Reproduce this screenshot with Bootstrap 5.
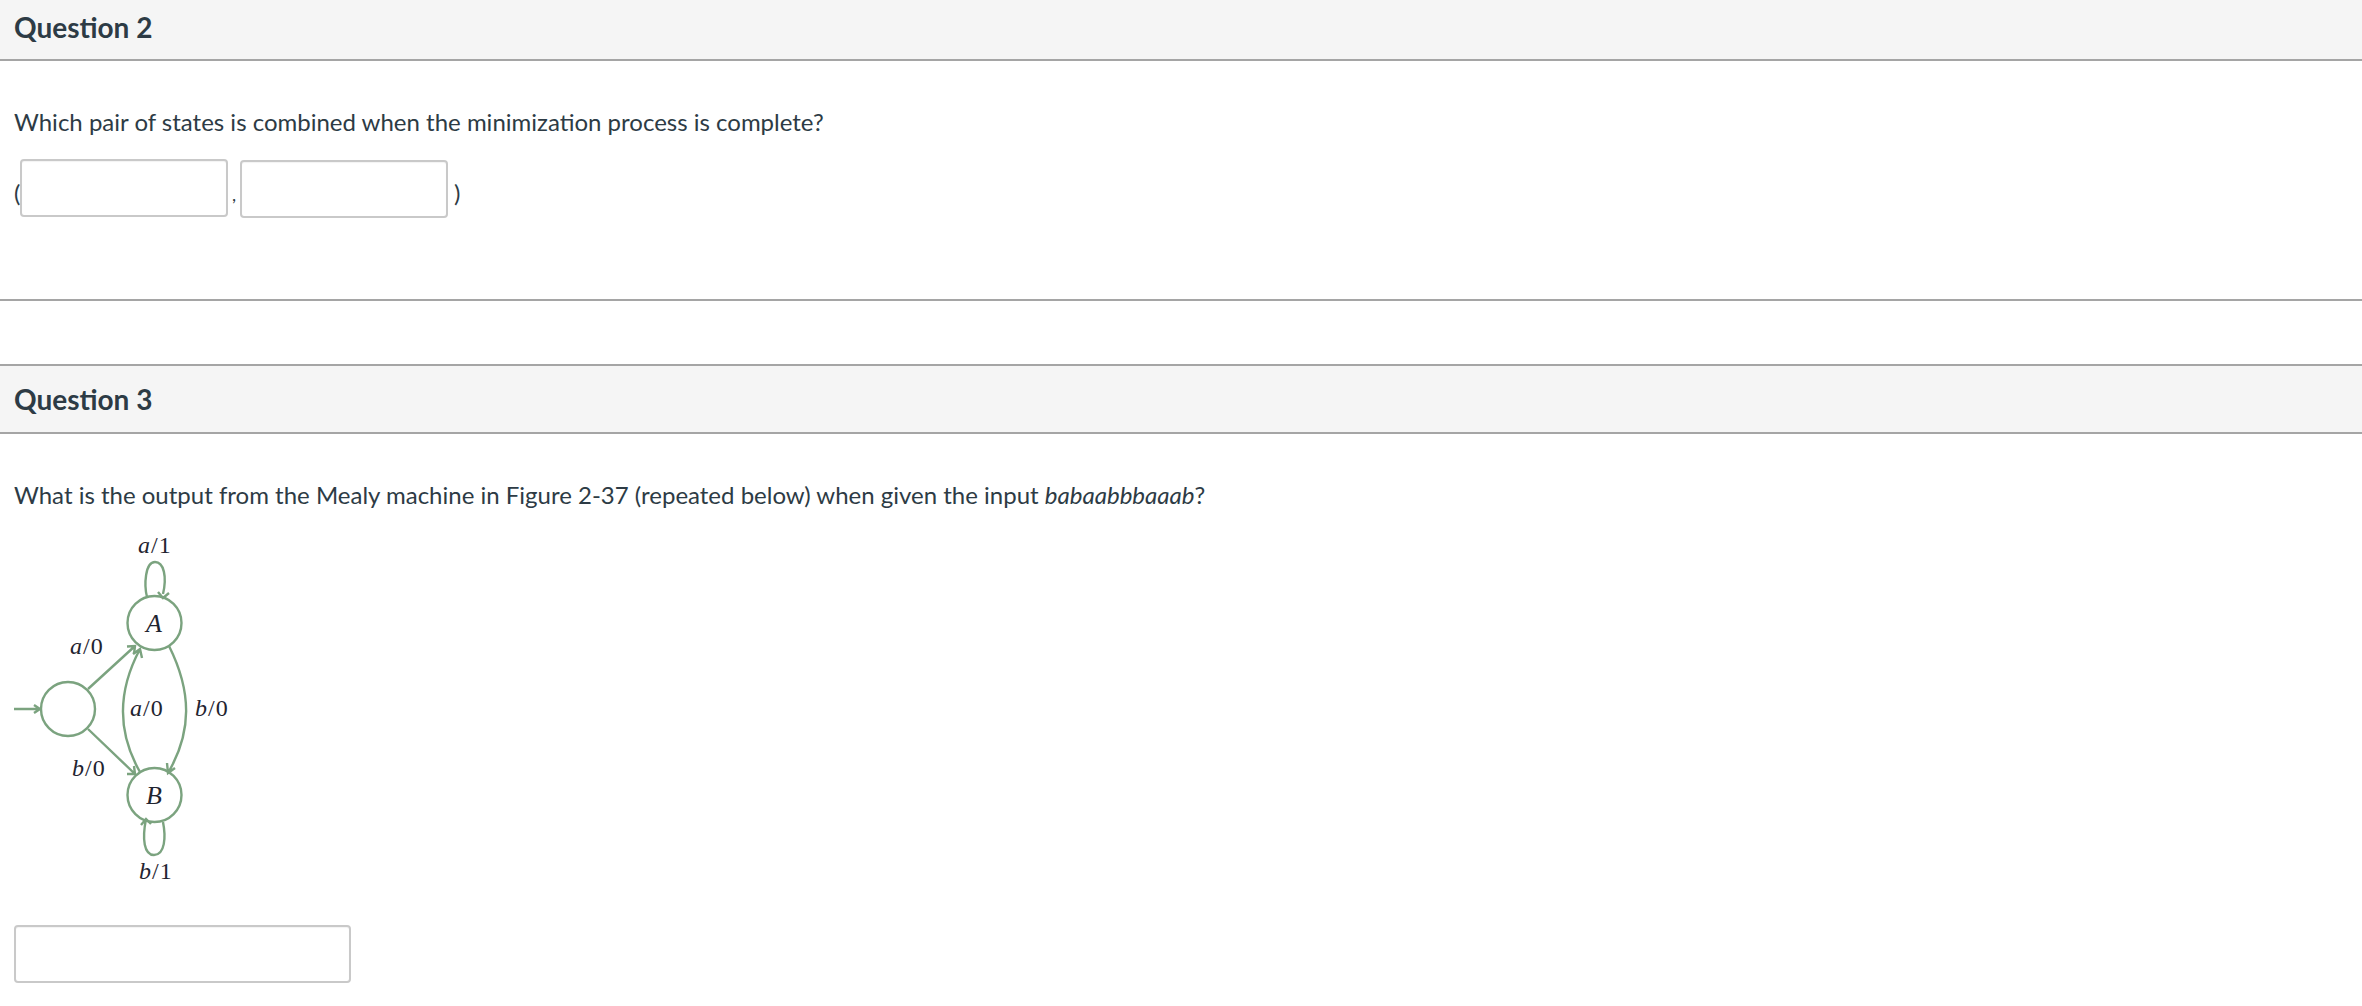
<!DOCTYPE html>
<html lang="en">
<head>
<meta charset="utf-8">
<title>Questions</title>
<link href="https://cdn.jsdelivr.net/npm/bootstrap@5.3.0/dist/css/bootstrap.min.css" rel="stylesheet">
<style>
html,body{background:#fff;overflow:hidden}
body{font-family:Lato,"Liberation Sans",sans-serif;color:#2d3b45;font-size:24px;line-height:36px}
.q-head{background:#f5f5f5;border-bottom:2px solid #a5a5a5;padding:0 14px;display:flex;align-items:center}
.q-head h2{font-family:Lato,sans-serif;font-size:28px;font-weight:700;margin:0;color:#2d3b45;line-height:36px}
.q-head-a{height:61px;padding-bottom:5px}
.q-head-b{height:70px;border-top:2px solid #a5a5a5}
.q-body-a{height:240px;padding:0 14px;border-bottom:2px solid #a5a5a5}
.q-spacer{height:63px}
.q-body-b{padding:0 14px}
.q-text-a{margin:0;padding-top:43px}
.q-text-b{margin:0;padding-top:43px}
.ans-row{margin-top:20px;height:60px;font-size:24px;align-items:center}
.ans{display:block;background:#fff;border:2px solid #c9c9c9;border-radius:4px;height:58px;box-shadow:inset 0 1px 1px rgba(0,0,0,.05);padding:0}
.ans-s{width:208px}
.ans-l{width:337px;margin-top:38px}
.ans-1{margin-top:-5px}
.ans-2{margin-top:-3px}
.sep{font-size:18px;width:12px;text-align:center;padding-top:8px}
.paren-a{width:6px;margin-top:6px;overflow:visible}
.paren-b{margin-left:6px;margin-top:6px}
.fig{display:block;margin:14px 0 0 -14px}
.fig text{font-family:"Liberation Serif",serif;font-style:italic;font-size:24px;letter-spacing:1px;fill:#1f2430}
.fig .up{font-style:normal}
.fig .st{fill:none;stroke:#7ba37f;stroke-width:2.4}
.fig .nm{font-size:26px}
</style>
</head>
<body>
<section>
  <div class="q-head q-head-a"><h2>Question 2</h2></div>
  <div class="q-body-a">
    <p class="q-text-a">Which pair of states is combined when the minimization process is complete?</p>
    <div class="d-flex ans-row">
      <span class="paren-a">(</span>
      <input class="ans ans-s ans-1" type="text" aria-label="First state">
      <span class="sep">,</span>
      <input class="ans ans-s ans-2" type="text" aria-label="Second state">
      <span class="paren-b">)</span>
    </div>
  </div>
</section>
<div class="q-spacer"></div>
<section>
  <div class="q-head q-head-b"><h2>Question 3</h2></div>
  <div class="q-body-b">
    <p class="q-text-b">What is the output from the Mealy machine in Figure 2-37 (repeated below) when given the input <em>babaabbbaaab</em>?</p>
    <svg class="fig" width="260" height="360" viewBox="0 0 260 360" xmlns="http://www.w3.org/2000/svg" aria-label="Mealy machine">
      <g class="st">
        <circle cx="154.500" cy="96" r="27"/>
        <circle cx="68" cy="182" r="27"/>
        <circle cx="154.500" cy="268" r="27"/>
        <path d="M14 182H40M34 178l6 4l-6 4"/>
        <path d="M88 162L135 119M127 119.500l8-.5l-1 8"/>
        <path d="M88 202L135 247M127 247l8 0l-1-8"/>
        <path d="M140 245C117 205 117 165 140 122M133 127l7-5l2 9"/>
        <path d="M169 119C192 165 192 205 168 246M167 236l1 10l7-5"/>
        <path d="M147 70C144 58 145 35 155 35C164 35 167 50 163 67M158 65l5 6l6-5"/>
        <path d="M163 295C166 310 165 328 154 328C144 328 142 312 146 292M141 298l5-6l5 5"/>
      </g>
      <text x="138" y="26">a<tspan class="up">/1</tspan></text>
      <text x="70" y="127">a<tspan class="up">/0</tspan></text>
      <text x="130" y="189">a<tspan class="up">/0</tspan></text>
      <text x="195" y="189">b<tspan class="up">/0</tspan></text>
      <text x="72" y="249">b<tspan class="up">/0</tspan></text>
      <text x="139" y="352">b<tspan class="up">/1</tspan></text>
      <text class="nm" x="146" y="105">A</text>
      <text class="nm" x="146" y="277">B</text>
    </svg>
    <input class="ans ans-l" type="text" aria-label="Output">
  </div>
</section>
<script src="https://cdn.jsdelivr.net/npm/bootstrap@5.3.0/dist/js/bootstrap.bundle.min.js"></script>
</body>
</html>
